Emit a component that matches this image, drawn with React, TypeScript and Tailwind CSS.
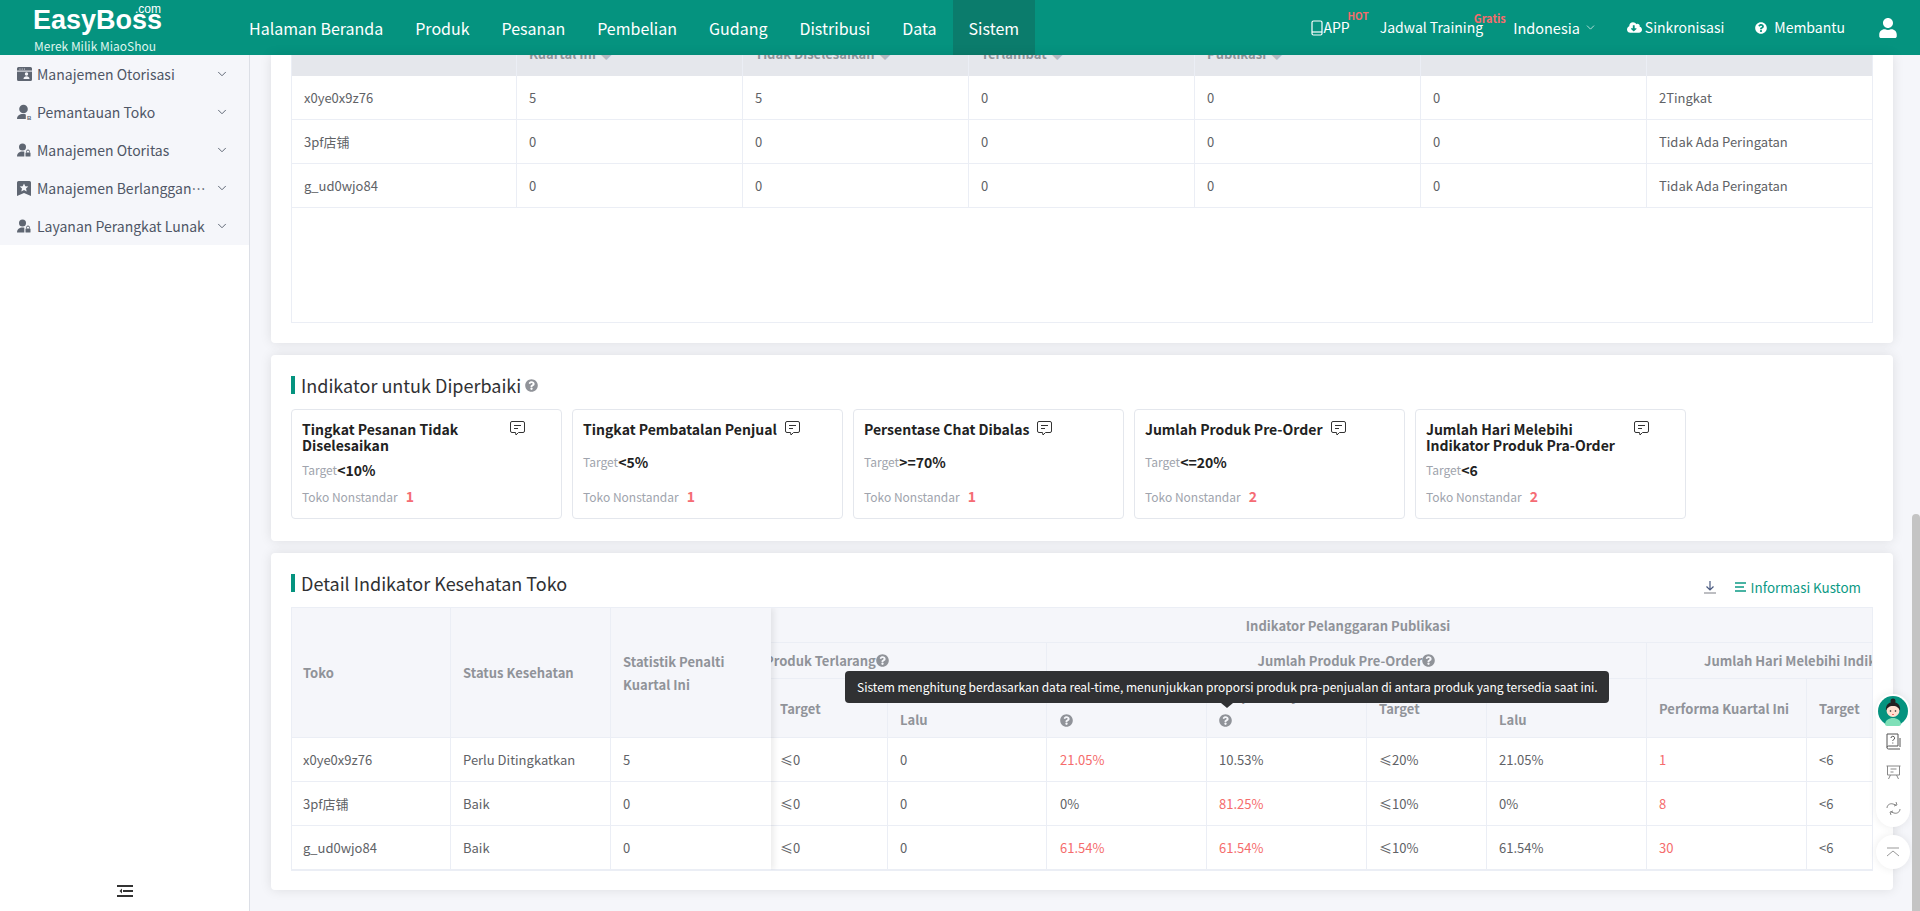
import { ChevronDown } from "lucide-react";
import { FaCloudDownloadAlt, FaQuestionCircle, FaUser } from "react-icons/fa";

const FONT = "[font-family:'Noto_Sans_CJK_SC','Noto_Sans',sans-serif]";

const navItems = ["Halaman Beranda", "Produk", "Pesanan", "Pembelian", "Gudang", "Distribusi", "Data", "Sistem"];

const AuthIcon = () => (
  <svg width="15" height="14" viewBox="0 0 15 14" fill="#5f6672">
    <path d="M1.5 0h12A1.5 1.5 0 0 1 15 1.5V12.500A1.500 1.500 0 0 1 13.500 14H1.500A1.500 1.500 0 0 1 0 12.500V1.500A1.500 1.500 0 0 1 1.500 0z" />
    <rect x="0" y="3.600" width="15" height="1" fill="#f5f6fa" />
    <circle cx="3" cy="2" r=".6" fill="#f5f6fa" /><circle cx="5.200" cy="2" r=".6" fill="#f5f6fa" /><circle cx="7.400" cy="2" r=".6" fill="#f5f6fa" />
    <circle cx="9.500" cy="7" r="1.700" fill="#f5f6fa" />
    <path d="M6.500 12c0-2 1.300-2.800 3-2.800s3 .8 3 2.800z" fill="#f5f6fa" />
  </svg>
);

const MonitorIcon = () => (
  <svg width="15" height="16" viewBox="0 0 15 16" fill="#5f6672">
    <circle cx="6.500" cy="5" r="4.300" />
    <path d="M0 15c0-3.500 2.500-5 6-5 1 0 2 .1 2.800.5V15z" />
    <text x="10" y="15.500" fontSize="6" fontFamily="Liberation Sans" fontWeight="700">B</text>
  </svg>
);

const LockUserIcon = () => (
  <svg width="14" height="14" viewBox="0 0 14 14" fill="#5f6672">
    <circle cx="5.500" cy="4" r="3.500" />
    <path d="M0 13.500c0-3.500 2.500-5 5.500-5 .8 0 1.300.1 1.800.3v4.700z" />
    <rect x="8.500" y="9.500" width="5" height="4" rx=".6" />
    <path d="M9.500 9.500V8.500a1.500 1.500 0 0 1 3 0v1" fill="none" stroke="#5f6672" />
  </svg>
);

const SubscribeIcon = () => (
  <svg width="14" height="15" viewBox="0 0 14 15" fill="#5f6672">
    <path d="M1.500 0h11A1.500 1.500 0 0 1 14 1.500V15l-7-3-7 3V1.500A1.500 1.500 0 0 1 1.500 0z" />
    <path d="M7 2.500l1.300 2.800 3 .3-2.300 2 .7 3L7 9l-2.700 1.600.7-3-2.300-2 3-.3z" fill="#f5f6fa" />
  </svg>
);

const sideItems = [
  { label: "Manajemen Otorisasi", icon: <AuthIcon /> },
  { label: "Pemantauan Toko", icon: <MonitorIcon /> },
  { label: "Manajemen Otoritas", icon: <LockUserIcon /> },
  { label: "Manajemen Berlangganan", icon: <SubscribeIcon /> },
  { label: "Layanan Perangkat Lunak", icon: <LockUserIcon /> },
];

const topRows = [
  ["x0ye0x9z76", "5", "5", "0", "0", "0", "2Tingkat"],
  ["3pf店铺", "0", "0", "0", "0", "0", "Tidak Ada Peringatan"],
  ["g_ud0wjo84", "0", "0", "0", "0", "0", "Tidak Ada Peringatan"],
];

const indicators = [
  { title: "Tingkat Pesanan Tidak Diselesaikan", target: "<10%", count: 1, iconRight: true },
  { title: "Tingkat Pembatalan Penjual", target: "<5%", count: 1 },
  { title: "Persentase Chat Dibalas", target: ">=70%", count: 1 },
  { title: "Jumlah Produk Pre-Order", target: "<=20%", count: 2 },
  { title: "Jumlah Hari Melebihi Indikator Produk Pra-Order", target: "<6", count: 2, iconRight: true },
];

const detailRows = [
  { shop: "x0ye0x9z76", status: "Perlu Ditingkatkan", penalty: "5", cells: ["≤0", "0", "21.05%", "10.53%", "≤20%", "21.05%", "1", "<6"], red: [2, 6] },
  { shop: "3pf店铺", status: "Baik", penalty: "0", cells: ["≤0", "0", "0%", "81.25%", "≤10%", "0%", "8", "<6"], red: [3, 6] },
  { shop: "g_ud0wjo84", status: "Baik", penalty: "0", cells: ["≤0", "0", "61.54%", "61.54%", "≤10%", "61.54%", "30", "<6"], red: [2, 3, 6] },
];

const Help = ({ size = 13 }: { size?: number }) => <FaQuestionCircle size={size} className="inline-block text-[#909399] shrink-0" />;

const SortMark = () => <span className="text-[#b4b8c0] text-[11px] ml-[5px]">◆</span>;

const Header = () => (
  <header className="h-[55px] bg-[#05937f] flex items-center text-white shrink-0">
    <div className="w-[233px] h-full shrink-0 pl-[33px] relative">
      <div className="[font-family:'Liberation_Sans',sans-serif] text-[27px] font-bold leading-none pt-[7px]">EasyBoss</div>
      <div className="[font-family:'Liberation_Sans',sans-serif] absolute left-[135px] top-[3px] text-[12px] leading-[12px]">.com</div>
      <div className="text-[12px] leading-4 mt-[4px] ml-[1px] text-[#dff5ee]">Merek Milik MiaoShou</div>
    </div>
    <nav className="flex h-full">
      {navItems.map((n) => (
        <div key={n} className={`px-4 flex items-center text-[16px] ${n === "Sistem" ? "bg-[#0b7c6c]" : ""}`}>{n}</div>
      ))}
    </nav>
    <div className="ml-auto flex items-center h-full text-[14px] pr-[22px]">
      <div className="relative flex items-center mr-[30px]">
        <svg width="12" height="16" viewBox="0 0 12 16" fill="none" stroke="white" strokeWidth="1.2"><rect x="1" y="1" width="10" height="14" rx="1.500" /><path d="M1 12h10" /></svg>
        <span className="ml-[1px]">APP</span>
        <span className="absolute left-[37px] -top-[7px] text-[10px] leading-3 text-[#f56c6c] font-bold">HOT</span>
      </div>
      <div className="relative mr-[30px]">
        Jadwal Training
        <span className="absolute left-[94px] -top-[5px] text-[11px] leading-3 text-[#f56c6c] font-bold">Gratis</span>
      </div>
      <div className="flex items-center mr-[30px] text-[14.500px]">
        Indonesia
        <ChevronDown size={13} strokeWidth={1.25} className="ml-[4px]" />
      </div>
      <div className="flex items-center mr-[31px]">
        <FaCloudDownloadAlt size={15} />
        <span className="ml-[3px]">Sinkronisasi</span>
      </div>
      <div className="flex items-center mr-[33px]">
        <FaQuestionCircle size={12} />
        <span className="ml-[7px]">Membantu</span>
      </div>
      <FaUser size={20} />
    </div>
  </header>
);

const Sidebar = () => (
  <aside className="w-[250px] shrink-0 border-r border-[#dcdfe6] bg-white flex flex-col">
    <div className="bg-[#f5f6fa] h-[190px]">
      {sideItems.map((s) => (
        <div key={s.label} className="h-[38px] flex items-center pl-[17px] pr-[20px]">
          <span className="w-[20px] shrink-0 flex">{s.icon}</span>
          <span className="w-[169px] truncate text-[14px] text-[#4f5666]">{s.label}</span>
          <ChevronDown size={14} strokeWidth={1.5} className="ml-auto shrink-0 text-[#4b5563]" />
        </div>
      ))}
    </div>
    <div className="mt-auto h-[40px] flex items-center justify-center">
      <svg width="16" height="12" viewBox="0 0 16 12" fill="#333"><rect x="0" y="0" width="16" height="2" /><rect x="6" y="5" width="10" height="2" /><rect x="0" y="10" width="16" height="2" /><path d="M5 3.500v5L2.500 6z" /></svg>
    </div>
  </aside>
);

const TopTable = () => (
  <div className="mx-[20px] border border-[#ebeef5] h-[268px] border-t-0 text-[13px] text-[#606266]">
    <div className="grid grid-cols-[225px_repeat(6,226px)] h-[21px] bg-[#e5e7ec] overflow-hidden font-bold text-[13px] text-[#909399]">
      {["", "Kuartal Ini", "Tidak Diselesaikan", "Terlambat", "Publikasi", "", ""].map((h, i) => (
        <div key={i} className="border-r border-[#ebeef5] last:border-r-0 pl-[12px] leading-5 -mt-[11px]">
          {h}{h && <SortMark />}
        </div>
      ))}
    </div>
    {topRows.map((r) => (
      <div key={r[0]} className="grid grid-cols-[225px_repeat(6,226px)] h-[44px] items-stretch border-b border-[#ebeef5]">
        {r.map((c, i) => (
          <div key={i} className="border-r border-[#ebeef5] last:border-r-0 pl-[12px] flex items-center">{c}</div>
        ))}
      </div>
    ))}
  </div>
);

const CommentIcon = ({ className }: { className: string }) => (
  <svg width="15" height="15" viewBox="0 0 15 15" fill="none" stroke="#333" strokeWidth="1" className={className}>
    <path d="M2 .5h11A1.500 1.500 0 0 1 14.500 2v8A1.500 1.500 0 0 1 13 11.500H8.500L6 14l-.5-2.500H2A1.500 1.500 0 0 1 .5 10V2A1.500 1.500 0 0 1 2 .5z" />
    <path d="M4 4.500h7M4 7.500h4" />
  </svg>
);

const IndicatorCard = ({ item }: { item: (typeof indicators)[number] }) => {
  const two = item.title.length > 30;
  return (
    <div className="w-[271px] h-[110px] border border-[#e4e7ed] rounded-[4px] px-[10px] pt-[11px] flex flex-col">
      <div className="flex items-start min-h-[32px]">
        <div className={`text-[14px] leading-4 font-bold text-[#222] ${item.iconRight ? "w-[195px]" : ""}`}>{item.title}</div>
        <CommentIcon className={`shrink-0 ${item.iconRight ? "ml-auto mr-[26px]" : "ml-[8px]"}`} />
      </div>
      <div className={`flex items-center h-[20px] ${two ? "mt-[7px]" : "-mt-[1px]"}`}>
        <span className="text-[12px] text-[#a0a4ad]">Target</span>
        <span className="text-[14px] font-bold text-[#222]">{item.target}</span>
      </div>
      <div className={`flex items-center text-[12px] text-[#a0a4ad] ${two ? "mt-[6px]" : "mt-[14px]"}`}>
        Toko Nonstandar
        <span className="ml-[8px] text-[14px] font-bold text-[#f56c74]">{item.count}</span>
      </div>
    </div>
  );
};

const SectionTitle = ({ children }: { children: React.ReactNode }) => (
  <div className="flex items-center">
    <span className="w-[4px] h-[18px] bg-[#05937f] mr-[6px]" />
    <span className="text-[18px] leading-6 text-[#303133]">{children}</span>
  </div>
);

const th = "bg-[#f5f6fa] text-[13px] font-bold text-[#909399] leading-[23px] border-[#ebeef5]";

const cellWidths = ["pl-[9px] w-[117px]", "pl-[12px] w-[159px]", "pl-[13px] w-[160px]", "pl-[12px] w-[160px]", "pl-[12px] w-[120px]", "pl-[12px] w-[160px]", "pl-[12px] w-[160px]", "pl-[12px] w-[66px]"];

const DetailTable = () => (
  <div className="mx-[20px] mt-[12px] relative border border-[#ebeef5] flex overflow-hidden h-[264px] text-[13px] text-[#606266]">
    {/* fixed columns */}
    <div className="w-[479px] shrink-0 relative z-10 bg-white shadow-[3px_0_6px_rgba(0,0,0,0.08)]">
      <div className={`${th} grid grid-cols-[159px_160px_160px] h-[130px] border-b`}>
        <div className="border-r border-[#ebeef5] flex items-center pl-[11px]">Toko</div>
        <div className="border-r border-[#ebeef5] flex items-center pl-[12px]">Status Kesehatan</div>
        <div className="flex items-center pl-[12px] pr-[8px]">Statistik Penalti Kuartal Ini</div>
      </div>
      {detailRows.map((r) => (
        <div key={r.shop} className="grid grid-cols-[159px_160px_160px] h-[44px] border-b border-[#ebeef5]">
          <div className="border-r border-[#ebeef5] flex items-center pl-[11px]">{r.shop}</div>
          <div className="border-r border-[#ebeef5] flex items-center pl-[12px]">{r.status}</div>
          <div className="flex items-center pl-[12px]">{r.penalty}</div>
        </div>
      ))}
    </div>
    {/* scrolled columns */}
    <div className="flex-1 min-w-0 overflow-hidden">
      <div className="w-[1154px]">
        <div className={`${th} h-[35px] border-b flex items-center justify-center`}>Indikator Pelanggaran Publikasi</div>
        <div className={`${th} h-[36px] border-b flex`}>
          <div className="w-[276px] shrink-0 border-r border-[#ebeef5] flex items-center whitespace-nowrap">
            <span className="-ml-[6px]">Produk Terlarang</span><Help />
          </div>
          <div className="w-[600px] shrink-0 border-r border-[#ebeef5] flex items-center justify-center whitespace-nowrap">Jumlah Produk Pre-Order<Help /></div>
          <div className="w-[278px] shrink-0 pl-[57px] flex items-center whitespace-nowrap">Jumlah Hari Melebihi Indikator</div>
        </div>
        <div className={`${th} h-[59px] border-b flex`}>
          <div className="border-r border-[#ebeef5] flex items-center pl-[9px] w-[117px] shrink-0">Target</div>
          <div className="border-r border-[#ebeef5] flex items-center pl-[12px] w-[159px] shrink-0">Kuartal<br />Lalu</div>
          <div className="border-r border-[#ebeef5] pl-[13px] w-[160px] shrink-0 pt-[5px]">Performa<br /><Help /></div>
          <div className="border-r border-[#ebeef5] pl-[12px] w-[160px] shrink-0 pt-[5px]">Proporsi Sejauh Ini<br /><Help /></div>
          <div className="border-r border-[#ebeef5] flex items-center pl-[12px] w-[120px] shrink-0">Target</div>
          <div className="border-r border-[#ebeef5] flex items-center pl-[12px] w-[160px] shrink-0">Kuartal<br />Lalu</div>
          <div className="border-r border-[#ebeef5] flex items-center pl-[12px] w-[160px] shrink-0 whitespace-nowrap">Performa Kuartal Ini</div>
          <div className="flex items-center pl-[12px]">Target</div>
        </div>
        {detailRows.map((r) => (
          <div key={r.shop} className="flex h-[44px] border-b border-[#ebeef5]">
            {r.cells.map((c, i) => (
              <div key={i} className={`flex items-center shrink-0 ${i < 7 ? "border-r border-[#ebeef5]" : ""} ${cellWidths[i]} ${r.red.includes(i) ? "text-[#f56c6c]" : ""}`}>
                {c}
              </div>
            ))}
          </div>
        ))}
      </div>
    </div>
  </div>
);

const Tooltip = () => (
  <div className="absolute left-[845px] top-[671px] h-[32px] w-[764px] bg-[#303133] rounded-[4px] text-white text-[12px] flex items-center pl-[12px] z-20 whitespace-nowrap">
    Sistem menghitung berdasarkan data real-time, menunjukkan proporsi produk pra-penjualan di antara produk yang tersedia saat ini.
    <span className="absolute left-[376px] top-[32px] border-x-[6px] border-x-transparent border-t-[5px] border-t-[#303133]" />
  </div>
);

const FloatTools = () => (
  <>
    <div className="absolute left-[1876px] top-[694px] w-[34px] h-[133px] bg-white rounded-full shadow-[0_0_8px_rgba(0,0,0,0.08)] z-20 flex flex-col items-center pt-[2px]">
      <svg width="30" height="30" viewBox="0 0 30 30">
        <circle cx="15" cy="15" r="15" fill="#05937f" />
        <path d="M7 29c0-5 4-7 8-7s8 2 8 7a15 15 0 0 1-16 0z" fill="#7fe0b8" />
        <circle cx="15" cy="14.500" r="6.500" fill="#ffe0d0" />
        <path d="M8 15c-1-7 4-9 7-9s8 2 7 9c-1-3-3-5-7-5s-6 2-7 5z" fill="#222" />
        <circle cx="15" cy="5" r="2.500" fill="#222" />
        <circle cx="12.500" cy="15" r=".8" fill="#222" /><circle cx="17.500" cy="15" r=".8" fill="#222" />
        <path d="M14 18.500h2" stroke="#f06a6a" strokeWidth="1" />
      </svg>
      <svg className="mt-[7px]" width="15" height="17" viewBox="0 0 15 17" fill="none" stroke="#555" strokeWidth="1">
        <path d="M1 1h11v12H2.500A1.500 1.500 0 0 0 1 14.500zM1 14.500A1.500 1.500 0 0 0 2.500 16H14M14 5v9" />
        <path d="M5 5a1.800 1.800 0 1 1 2.300 1.800c-.5.2-.5.5-.5 1.200M6.800 9.500v1" />
      </svg>
      <svg className="mt-[15px]" width="15" height="15" viewBox="0 0 15 15" fill="none" stroke="#888" strokeWidth="1">
        <path d="M.5 1h14M1.500 1v9h12V1M4.500 4h6M4.500 7h3M4.500 10l-2 4M10.500 10l2 4" />
      </svg>
      <svg className="mt-[21px]" width="15" height="15" viewBox="0 0 15 15" fill="none" stroke="#888" strokeWidth="1">
        <path d="M1 7c0-3 3-5 6-4l3 1M10 1l1 3-3 1M14 8c0 3-3 5-6 4l-3-1M5 14l-1-3 3-1" />
      </svg>
    </div>
    <div className="absolute left-[1876px] top-[835px] w-[34px] h-[34px] bg-white rounded-full shadow-[0_0_8px_rgba(0,0,0,0.08)] z-20 flex items-center justify-center">
      <svg width="14" height="11" viewBox="0 0 14 11" fill="none" stroke="#999" strokeWidth="1"><path d="M1 1h12M1 9l6-5 6 5" /></svg>
    </div>
    <div className="absolute left-[1912px] top-[514px] w-[8px] h-[397px] bg-[#c4c4c4] rounded-t-[4px] z-20" />
  </>
);

export default function App() {
  return (
    <div className={`${FONT} w-[1920px] h-[911px] overflow-hidden relative flex flex-col bg-[#f5f6fa]`}>
      <Header />
      <div className="flex flex-1 min-h-0">
        <Sidebar />
        <main className="flex-1 min-w-0 pl-[21px] pr-[27px]">
          <section className="bg-white h-[288px] rounded-b-[4px] shadow-[0_0_12px_rgba(0,0,0,0.1)]">
            <TopTable />
          </section>
          <section className="bg-white h-[186px] mt-[12px] rounded-[4px] px-[20px] pt-[18px] shadow-[0_0_12px_rgba(0,0,0,0.1)]">
            <div className="flex items-center">
              <SectionTitle>Indikator untuk Diperbaiki</SectionTitle>
              <span className="ml-[4px] flex"><Help /></span>
            </div>
            <div className="flex gap-[10px] mt-[12px]">
              {indicators.map((it) => <IndicatorCard key={it.title} item={it} />)}
            </div>
          </section>
          <section className="bg-white h-[337px] mt-[12px] rounded-[4px] pt-[18px] shadow-[0_0_12px_rgba(0,0,0,0.1)]">
            <div className="flex items-center px-[20px] h-[24px]">
              <SectionTitle>Detail Indikator Kesehatan Toko</SectionTitle>
              <svg width="12" height="13" viewBox="0 0 12 13" fill="none" strokeWidth="1.200" className="ml-auto mt-[8px]">
                <path d="M6 0v9M2.500 5.500L6 9l3.500-3.500" stroke="#4a5a80" /><path d="M0 12h12" stroke="#909399" />
              </svg>
              <div className="flex items-center text-[13.400px] text-[#0c9a85] ml-[19px] mr-[12px] mt-[8px]">
                <svg width="11" height="10" viewBox="0 0 11 10" fill="none" stroke="#0c9a85" strokeWidth="1.400" className="mr-[5px]">
                  <path d="M0 1h11M0 5h9M0 9h11" />
                </svg>
                Informasi Kustom
              </div>
            </div>
            <DetailTable />
          </section>
        </main>
      </div>
      <Tooltip />
      <FloatTools />
    </div>
  );
}
